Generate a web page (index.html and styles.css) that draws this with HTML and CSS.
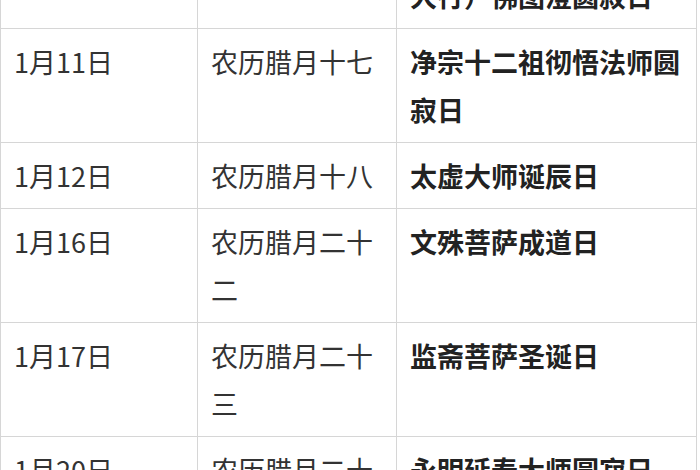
FILE: index.html
```html
<!DOCTYPE html>
<html lang="zh-CN">
<head>
<meta charset="utf-8">
<title>佛教节日</title>
<link rel="stylesheet" href="styles.css">
</head>
<body>
<table class="cal">
  <colgroup>
    <col class="c-date">
    <col class="c-lunar">
    <col class="c-event">
  </colgroup>
  <tbody>
    <tr>
      <td>1月10日</td>
      <td>农历腊月十六</td>
      <td class="ev">后赵高僧（西域人，德大行）佛图澄圆寂日</td>
    </tr>
    <tr>
      <td>1月11日</td>
      <td>农历腊月十七</td>
      <td class="ev">净宗十二祖彻悟法师圆寂日</td>
    </tr>
    <tr>
      <td>1月12日</td>
      <td>农历腊月十八</td>
      <td class="ev">太虚大师诞辰日</td>
    </tr>
    <tr>
      <td>1月16日</td>
      <td>农历腊月二十二</td>
      <td class="ev">文殊菩萨成道日</td>
    </tr>
    <tr>
      <td>1月17日</td>
      <td>农历腊月二十三</td>
      <td class="ev">监斋菩萨圣诞日</td>
    </tr>
    <tr>
      <td>1月20日</td>
      <td>农历腊月二十六</td>
      <td class="ev">永明延寿大师圆寂日</td>
    </tr>
  </tbody>
</table>
</body>
</html>
```
FILE: styles.css
```css
html, body {
  margin: 0;
  padding: 0;
  background: #fff;
  overflow: hidden;
}
body {
  font-family: "Noto Sans CJK SC", "Noto Sans", sans-serif;
  color: #333;
}
.cal {
  border-collapse: collapse;
  table-layout: fixed;
  width: 696px;
  margin-top: -86px;
  font-size: 27px;
  line-height: 48px;
}
.c-date { width: 197px; }
.c-lunar { width: 199px; }
.c-event { width: 300px; }
.cal td {
  border: 1px solid #d6d6d6;
  padding: 9px 10px 8px 13px;
  vertical-align: top;
  word-break: break-all;
}
.cal td.ev {
  font-weight: bold;
  color: #222;
}
```
